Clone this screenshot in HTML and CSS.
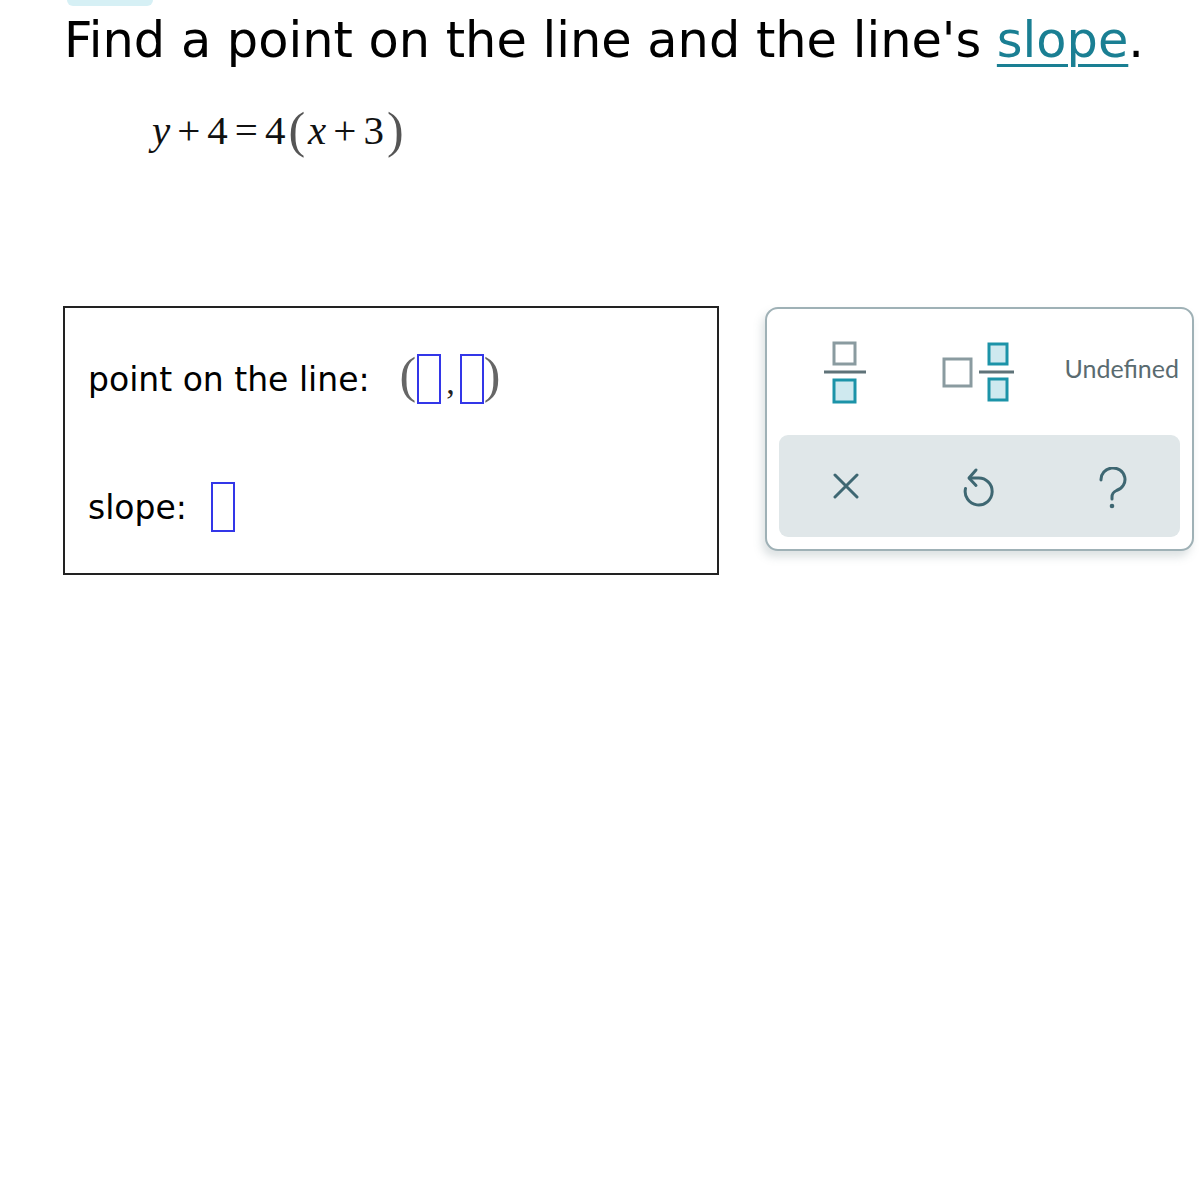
FILE: index.html
```html
<!DOCTYPE html>
<html>
<head>
<meta charset="utf-8">
<link rel="stylesheet" href="styles.css">
</head>
<body>
<div class="tab"></div>
<h1 class="title">Find a point on the line and the line's <a class="link" href="#">slope</a>.</h1>
<div class="equation"><span class="var">y</span><span class="op">+</span><span>4</span><span class="op">=</span><span>4</span><span class="paren">(</span><span class="var">x</span><span class="op">+</span><span>3</span><span class="paren">)</span></div>
<div class="work">
  <div class="answer">
    <div class="row row-point">
      <span class="label">point on the line:</span>
      <span class="pair"><span class="pp">(</span><span class="slot"></span><span class="comma">,</span><span class="slot"></span><span class="pp">)</span></span>
    </div>
    <div class="row row-slope">
      <span class="label">slope:</span>
      <span class="slot"></span>
    </div>
  </div>
  <div class="panel">
    <div class="keys">
      <button class="key key-frac" aria-label="fraction">
        <svg width="44" height="66" viewBox="0 0 44 66">
          <rect x="10" y="3" width="21" height="21" fill="none" stroke="#8a9ba0" stroke-width="3"/>
          <line x1="0" y1="32" x2="42" y2="32" stroke="#5f7379" stroke-width="3"/>
          <rect x="10" y="40" width="21" height="22" fill="#cfe9ef" stroke="#1c93a8" stroke-width="3"/>
        </svg>
      </button>
      <button class="key key-mixed" aria-label="mixed number">
        <svg width="76" height="62" viewBox="0 0 76 62">
          <rect x="3" y="18" width="27" height="27" fill="none" stroke="#8a9ba0" stroke-width="3"/>
          <rect x="48" y="3" width="18" height="20" fill="#cfe9ef" stroke="#1c93a8" stroke-width="3"/>
          <line x1="38" y1="31" x2="73" y2="31" stroke="#5f7379" stroke-width="3"/>
          <rect x="48" y="38" width="18" height="21" fill="#cfe9ef" stroke="#1c93a8" stroke-width="3"/>
        </svg>
      </button>
      <button class="key key-text">Undefined</button>
    </div>
    <div class="tools">
      <button class="tool" aria-label="clear">
        <svg width="26" height="26" viewBox="0 0 26 26"><path d="M2 2 L24 24 M24 2 L2 24" stroke="#3e6772" stroke-width="3" stroke-linecap="round" fill="none"/></svg>
      </button>
      <button class="tool" aria-label="undo">
        <svg width="34" height="42" viewBox="0 0 34 42"><path d="M14 5 L7 13 L14 20.5" stroke="#3e6772" stroke-width="3" stroke-linecap="round" stroke-linejoin="round" fill="none"/><path d="M7.5 13 H16 A13.5 13.5 0 1 1 3.5 23.5" stroke="#3e6772" stroke-width="3" stroke-linecap="round" fill="none"/></svg>
      </button>
      <button class="tool tool-help" aria-label="help">
        <svg width="30" height="44" viewBox="0 0 30 44"><path d="M3 13 A12 11.5 0 1 1 18.5 23.5 Q14 25.5 14 30 L14 32" stroke="#3e6772" stroke-width="3" stroke-linecap="round" fill="none"/><circle cx="14" cy="39" r="2.3" fill="#3e6772"/></svg>
      </button>
    </div>
  </div>
</div>
</body>
</html>
```

FILE: styles.css
```css
html, body {
  margin: 0;
  padding: 0;
  background: #ffffff;
}
body {
  font-family: "DejaVu Sans", Verdana, sans-serif;
  color: #000;
}
.tab {
  width: 86px;
  height: 6px;
  margin-left: 67px;
  background: #d6f0f5;
  border-radius: 0 0 14px 14px;
}
.title {
  margin: 0;
  padding: 6px 0 0 64px;
  font-size: 49.4px;
  font-weight: normal;
  line-height: 56px;
  letter-spacing: 0;
}
.link {
  color: #1a7f93;
  text-decoration: underline;
  text-decoration-thickness: 3px;
  text-underline-offset: 7px;
}
.equation {
  padding: 16px 0 0 152px;
  font-family: "Liberation Serif", "Times New Roman", serif;
  font-size: 41px;
  line-height: 60px;
  height: 92px;
  color: #111;
  display: flex;
  align-items: center;
}
.equation .var {
  font-style: italic;
}
.equation .op {
  margin: 0 7px;
}
.equation .paren {
  font-size: 50px;
  color: #555;
  display: inline-block;
  margin: 0 3px;
}
.work {
  display: flex;
  align-items: flex-start;
  gap: 46px;
  margin-top: 130px;
  padding-left: 63px;
}
.answer {
  box-sizing: border-box;
  width: 656px;
  height: 269px;
  border: 2px solid #222;
  padding: 46px 0 0 23px;
}
.row {
  display: flex;
  align-items: center;
  font-size: 33px;
}
.row-slope {
  margin-top: 78px;
}
.label {
  margin-right: 30px;
}
.row-slope .label {
  margin-right: 24px;
}
.pair {
  display: flex;
  align-items: center;
  font-family: "Liberation Serif", serif;
}
.pp {
  font-size: 50px;
  color: #666;
  line-height: 1;
  margin-top: -8px;
}
.comma {
  font-size: 34px;
  color: #222;
  margin: 8px 5px 0 5px;
}
.slot {
  display: inline-block;
  box-sizing: border-box;
  width: 24px;
  height: 50px;
  border: 2px solid #3336e8;
}
.pp + .slot {
  margin-left: 1px;
}
.panel {
  box-sizing: border-box;
  width: 429px;
  height: 244px;
  margin-top: 1px;
  border: 2px solid #9fb1b6;
  border-radius: 13px;
  padding: 0 12px 12px 12px;
  box-shadow: -3px 6px 8px rgba(120, 140, 145, 0.25);
  display: flex;
  flex-direction: column;
  background: #fff;
}
.keys {
  height: 126px;
  display: grid;
  grid-template-columns: 1fr 1fr 1fr;
  align-items: center;
}
button {
  border: none;
  background: none;
  padding: 0;
  margin: 0;
  cursor: pointer;
}
.key {
  display: flex;
  align-items: center;
  justify-content: center;
  height: 100%;
}
.key-frac svg {
  margin-top: 2px;
}
.key-text {
  font-family: Lato, "Open Sans", sans-serif;
  font-size: 25px;
  color: #5a6b70;
  justify-content: flex-end;
  padding: 0 1px 8px 0;
}
.tools {
  flex: 1;
  background: #e0e7e9;
  border-radius: 9px;
  display: grid;
  grid-template-columns: 1fr 1fr 1fr;
  align-items: center;
}
.tool {
  display: flex;
  align-items: center;
  justify-content: center;
  height: 100%;
}
.tool-help svg {
  margin-top: 6px;
}
```
